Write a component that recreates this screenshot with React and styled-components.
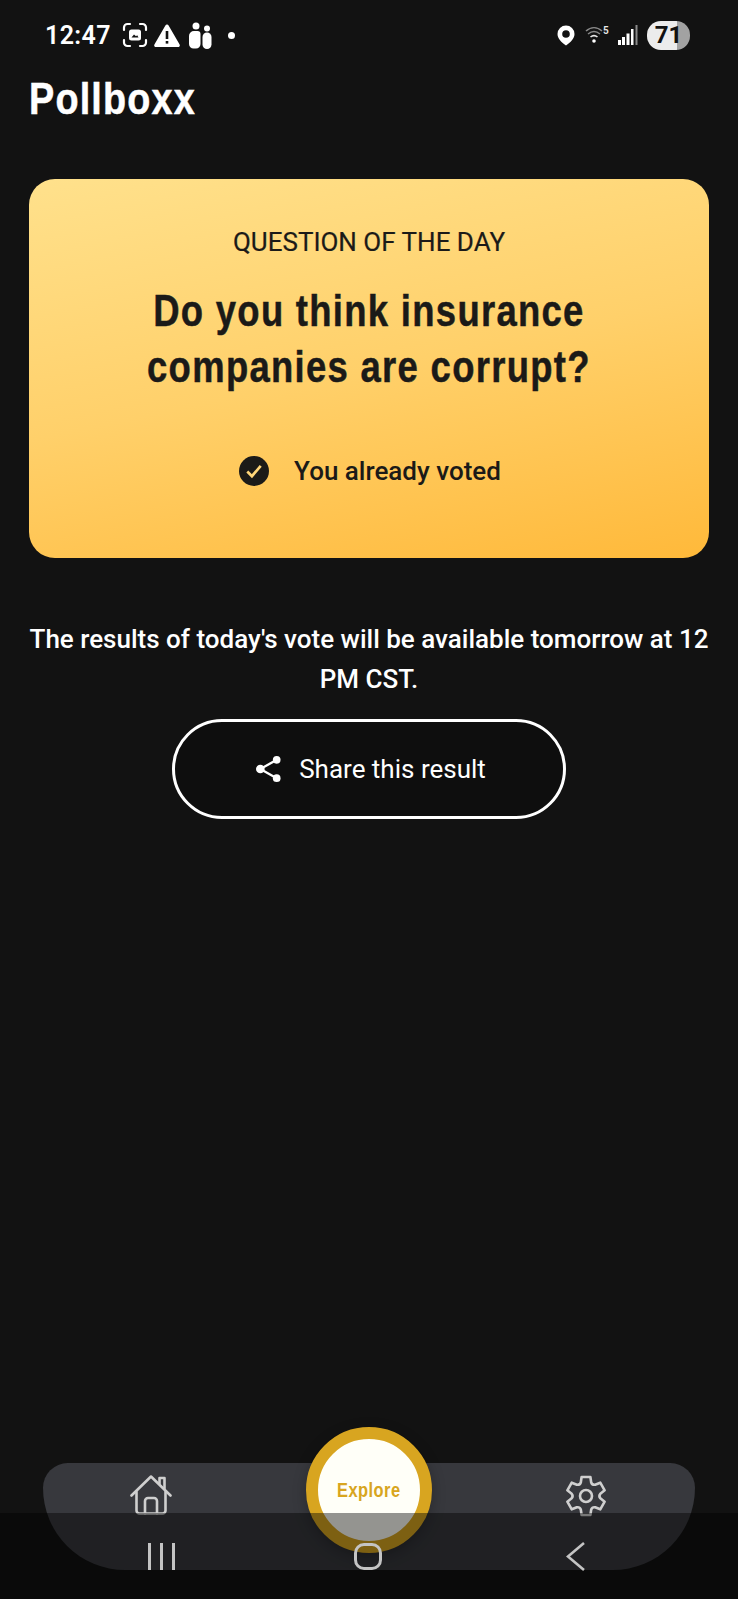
import styled, { createGlobalStyle } from "styled-components";

const GlobalStyle = createGlobalStyle`
  html, body {
    margin: 0;
    padding: 0;
    background: #121212;
  }
  * {
    box-sizing: border-box;
  }
`;

const condensed = `"Liberation Sans", Arial, sans-serif`;

const Page = styled.div`
  position: relative;
  width: 738px;
  height: 1599px;
  overflow: hidden;
  display: flex;
  flex-direction: column;
  background: #121212;
  color: #fff;
  font-family: Roboto, sans-serif;
`;

const StatusBar = styled.div`
  height: 70px;
  flex: none;
  padding: 0 48px 0 45px;
  display: flex;
  align-items: center;
  justify-content: space-between;
`;

const StatusGroup = styled.div`
  display: flex;
  align-items: center;
`;

const Clock = styled.span`
  font-size: 25px;
  font-weight: 600;
  letter-spacing: 0.4px;
  margin-right: 11px;
`;

const Dot = styled.span`
  width: 7px;
  height: 7px;
  border-radius: 50%;
  background: #fff;
  margin-left: 16px;
`;

const Battery = styled.div`
  width: 43px;
  height: 29px;
  margin-left: 9px;
  border-radius: 14px;
  background: linear-gradient(to right, #ececec 0 70%, #a2a2a2 70% 100%);
  color: #111;
  font-size: 24px;
  font-weight: 700;
  line-height: 29px;
  text-align: center;
`;

const AppTitle = styled.h1`
  margin: 2px 0 0 29px;
  font-family: ${condensed};
  font-size: 45px;
  font-weight: 700;
  line-height: 54px;
  letter-spacing: 1.4px;
  white-space: nowrap;
  transform: scaleX(0.84);
  transform-origin: left center;
  -webkit-text-stroke: 0.5px #fff;
`;

const Card = styled.section`
  margin: 53px 29px 0;
  height: 379px;
  padding-top: 45px;
  border-radius: 26px;
  display: flex;
  flex-direction: column;
  align-items: center;
  color: #1b1a18;
  background: linear-gradient(168deg, #ffe18c 0%, #ffd06a 50%, #ffb93a 100%);
`;

const Eyebrow = styled.div`
  font-size: 26px;
  line-height: 36px;
  -webkit-text-stroke: 0.2px #1b1a18;
`;

const Question = styled.h2`
  margin: 23px 0 0;
  font-family: ${condensed};
  font-size: 45px;
  font-weight: 700;
  line-height: 56px;
  letter-spacing: 1.6px;
  text-align: center;
  white-space: nowrap;
  transform: scaleX(0.81);
  -webkit-text-stroke: 0.5px #1b1a18;
`;

const VotedRow = styled.div`
  margin-top: 61px;
  padding-left: 2px;
  display: flex;
  align-items: center;
  gap: 25px;
  font-size: 26px;
  font-weight: 500;
`;

const Note = styled.p`
  margin: 61px 20px 0;
  font-size: 26px;
  font-weight: 500;
  line-height: 40px;
  text-align: center;
`;

const ShareButton = styled.button`
  align-self: center;
  margin-top: 20px;
  width: 394px;
  height: 100px;
  flex: none;
  padding: 0 0 0 4px;
  border: 3px solid #fff;
  border-radius: 50px;
  background: #0e0e0e;
  color: #fff;
  font-family: inherit;
  font-size: 26px;
  display: flex;
  align-items: center;
  justify-content: center;
  gap: 17px;
`;

const TabBar = styled.nav`
  position: relative;
  margin: auto 43px 29px;
  height: 107px;
  flex: none;
  padding: 12px 88px 0 87px;
  border-radius: 26px 26px 86px 86px;
  background: #37383d;
  display: flex;
  justify-content: space-between;
  align-items: flex-start;
  color: #cfcfcf;
`;

const ExploreButton = styled.button`
  position: absolute;
  left: 263px;
  top: -36px;
  width: 126px;
  height: 126px;
  padding: 0;
  border: 12px solid #d8a520;
  border-radius: 50%;
  background: #fffff8;
  color: #d8a520;
  font-family: ${condensed};
  font-size: 20px;
  font-weight: 700;
  letter-spacing: 0.6px;
  box-shadow: 0 4px 14px rgba(0, 0, 0, 0.25);
`;

const ExploreLabel = styled.span`
  display: inline-block;
  transform: scaleX(0.82);
`;

const SystemNav = styled.div`
  position: absolute;
  left: 0;
  right: 0;
  bottom: 0;
  height: 86px;
  padding: 30px 153px 0 148px;
  background: rgba(0, 0, 0, 0.42);
  display: flex;
  justify-content: space-between;
  align-items: flex-start;
  color: #c4c4c4;
`;

const RecentBars = styled.div`
  width: 27px;
  height: 27px;
  display: flex;
  justify-content: space-between;
`;

const Bar = styled.span`
  width: 3px;
  background: currentColor;
`;

const HomeKey = styled.div`
  width: 28px;
  height: 27px;
  margin-left: -5px;
  border: 3px solid currentColor;
  border-radius: 10px;
`;

function FrameIcon() {
  return (
    <svg width="26" height="26" viewBox="0 0 26 26" fill="none" stroke="#fff" strokeWidth="2.2" strokeLinecap="round">
      <path d="M2 8V5.5A3.5 3.5 0 0 1 5.5 2H8M18 2h2.5A3.5 3.5 0 0 1 24 5.5V8M24 18v2.5a3.5 3.5 0 0 1-3.5 3.5H18M8 24H5.5A3.5 3.5 0 0 1 2 20.500V18" />
      <rect x="7" y="7.500" width="12" height="11" rx="2.500" fill="#fff" stroke="none" />
      <path d="M9.500 15.500l2.500-3 2 1.800 1.200-1 1.300 2.200z" fill="#121212" stroke="none" />
    </svg>
  );
}

function WarningIcon() {
  return (
    <svg width="28" height="25" viewBox="0 0 27 25" style={{ marginLeft: 5 }}>
      <path d="M13.500 1.500a1.800 1.800 0 0 1 1.600.9l11 19a1.800 1.800 0 0 1-1.600 2.700h-22a1.800 1.800 0 0 1-1.600-2.700l11-19a1.800 1.800 0 0 1 1.600-.9z" fill="#fff" />
      <rect x="12.200" y="8" width="2.600" height="8" fill="#121212" />
      <rect x="12.200" y="18" width="2.600" height="2.600" fill="#121212" />
    </svg>
  );
}

function PeopleIcon() {
  return (
    <svg width="24" height="27" viewBox="0 0 24 27" fill="#fff" style={{ marginLeft: 7 }}>
      <circle cx="8" cy="4" r="3.500" />
      <circle cx="19" cy="6.500" r="3" />
      <path d="M1 14a5 5 0 0 1 5-5h3.500a3 3 0 0 1 3 3v10a4.500 4.500 0 0 1-4.500 4.500h-2.500A4.500 4.500 0 0 1 1 22z" />
      <path d="M14.500 15a4.500 4.500 0 0 1 9 0v7.500a4.500 4.500 0 0 1-9 0z" />
    </svg>
  );
}

function PinIcon() {
  return (
    <svg width="18" height="21" viewBox="0 0 18 21">
      <path fillRule="evenodd" d="M9 0.500a8.500 8.500 0 0 1 8.500 8.500c0 4.500-4 8.500-8.500 11.500C4.500 17.500 0.500 13.500 0.500 9A8.500 8.500 0 0 1 9 .5zM9 5.200a3.800 3.800 0 1 0 0 7.600 3.800 3.800 0 0 0 0-7.600z" fill="#fff" />
    </svg>
  );
}

function WifiIcon() {
  return (
    <svg width="24" height="20" viewBox="0 0 24 20" fill="none" style={{ marginLeft: 10 }}>
      <path d="M1 6c5-4.500 11-4.500 16 0" stroke="#8a8a8a" strokeWidth="1.500" />
      <path d="M3 9c3.800-3.200 8.200-3.200 12 0" stroke="#8a8a8a" strokeWidth="1.500" />
      <path d="M5.500 12c2.200-1.800 4.800-1.800 7 0" stroke="#e8e8e8" strokeWidth="1.600" />
      <circle cx="9" cy="16" r="1.800" fill="#fff" />
      <text x="18" y="9" fill="#e8e8e8" fontSize="10" fontWeight="600" fontFamily="Roboto, sans-serif">5</text>
    </svg>
  );
}

function SignalIcon() {
  return (
    <svg width="20" height="20" viewBox="0 0 20 20" style={{ marginLeft: 9 }}>
      <rect x="0" y="15" width="3" height="5" fill="#fff" />
      <rect x="4" y="12" width="3" height="8" fill="#fff" />
      <rect x="8.500" y="8.500" width="3" height="11.500" fill="#fff" />
      <rect x="13" y="4" width="2.500" height="16" fill="#fff" />
      <rect x="17.500" y="0" width="2" height="20" fill="#8a8a8a" />
    </svg>
  );
}

function CheckBadge() {
  return (
    <svg width="30" height="30" viewBox="0 0 29 29">
      <circle cx="14.500" cy="14.500" r="14.500" fill="#1b1a18" />
      <path d="M8 15l4.500 4.500L21 9.500" fill="none" stroke="#ffd679" strokeWidth="2.600" />
    </svg>
  );
}

function ShareIcon() {
  return (
    <svg width="26" height="28" viewBox="0 0 27 28" fill="#fff">
      <circle cx="21.500" cy="4.500" r="4" />
      <circle cx="4.500" cy="14" r="4.500" />
      <circle cx="21.500" cy="23.500" r="4" />
      <path d="M4.500 14L21.500 4.500M4.500 14l17 9.500" stroke="#fff" strokeWidth="2.400" />
    </svg>
  );
}

function HomeIcon() {
  return (
    <svg width="42" height="40" viewBox="0 0 42 40" fill="none" stroke="currentColor" strokeWidth="2.600" strokeLinecap="round" strokeLinejoin="round">
      <path d="M1.500 20.500L21 1.500l19.500 19" />
      <path d="M29.500 8.500V3h5v10.500" />
      <path d="M6.500 17v18.500a3 3 0 0 0 3 3h23a3 3 0 0 0 3-3V17" />
      <path d="M15 38.500V26a3 3 0 0 1 3-3h6a3 3 0 0 1 3 3v12.500" />
    </svg>
  );
}

// six flat teeth, one pointing straight up
function gearPath() {
  const at = (deg, r) => {
    const a = (deg * Math.PI) / 180;
    return `${(21 + r * Math.cos(a)).toFixed(2)} ${(21 + r * Math.sin(a)).toFixed(2)}`;
  };
  let d = `M${at(-90 - 21, 14.5)}`;
  for (let i = 0; i < 6; i++) {
    const a = i * 60 - 90;
    d += `L${at(a - 13, 19.5)}L${at(a + 13, 19.5)}L${at(a + 21, 14.5)}`;
    d += `Q${at(a + 30, 12.5)} ${at(a + 39, 14.5)}`;
  }
  return d + "Z";
}

function GearIcon() {
  return (
    <svg width="42" height="42" viewBox="0 0 42 42" fill="none" stroke="currentColor" strokeWidth="2.600" strokeLinejoin="round">
      <path d={gearPath()} />
      <circle cx="21" cy="21" r="6" />
    </svg>
  );
}

function BackKey() {
  return (
    <svg width="19" height="29" viewBox="0 0 19 29" fill="none" stroke="currentColor" strokeWidth="2.600" style={{ marginTop: -1 }}>
      <path d="M18 1L2 14.500 18 28" />
    </svg>
  );
}

export default function App() {
  return (
    <Page>
      <GlobalStyle />
      <StatusBar>
        <StatusGroup>
          <Clock>12:47</Clock>
          <FrameIcon />
          <WarningIcon />
          <PeopleIcon />
          <Dot />
        </StatusGroup>
        <StatusGroup>
          <PinIcon />
          <WifiIcon />
          <SignalIcon />
          <Battery>71</Battery>
        </StatusGroup>
      </StatusBar>

      <AppTitle>Pollboxx</AppTitle>

      <Card>
        <Eyebrow>QUESTION OF THE DAY</Eyebrow>
        <Question>
          Do you think insurance
          <br />
          companies are corrupt?
        </Question>
        <VotedRow>
          <CheckBadge />
          You already voted
        </VotedRow>
      </Card>

      <Note>The results of today's vote will be available tomorrow at 12 PM CST.</Note>

      <ShareButton type="button">
        <ShareIcon />
        Share this result
      </ShareButton>

      <TabBar>
        <HomeIcon />
        <ExploreButton type="button">
          <ExploreLabel>Explore</ExploreLabel>
        </ExploreButton>
        <GearIcon />
      </TabBar>

      <SystemNav>
        <RecentBars>
          <Bar />
          <Bar />
          <Bar />
        </RecentBars>
        <HomeKey />
        <BackKey />
      </SystemNav>
    </Page>
  );
}
